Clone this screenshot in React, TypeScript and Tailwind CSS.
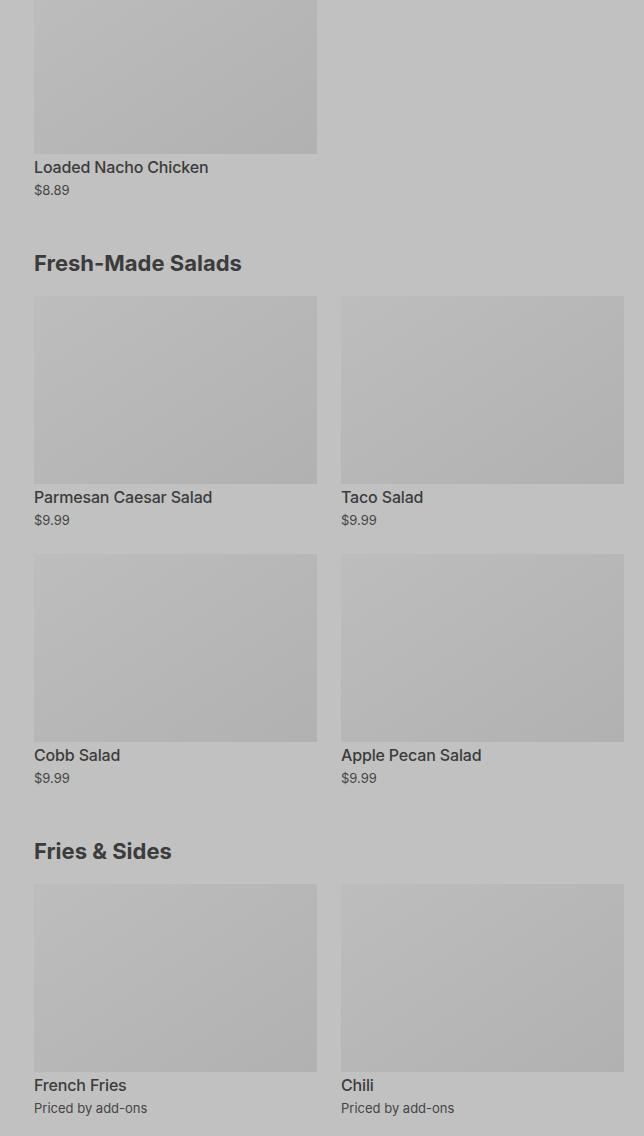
type Item = { name: string; price: string }

const sections: { title?: string; items: Item[] }[] = [
    { items: [{ name: 'Loaded Nacho Chicken', price: '$8.89' }] },
    {
        title: 'Fresh-Made Salads',
        items: [
            { name: 'Parmesan Caesar Salad', price: '$9.99' },
            { name: 'Taco Salad', price: '$9.99' },
            { name: 'Cobb Salad', price: '$9.99' },
            { name: 'Apple Pecan Salad', price: '$9.99' },
        ],
    },
    {
        title: 'Fries & Sides',
        items: [
            { name: 'French Fries', price: 'Priced by add-ons' },
            { name: 'Chili', price: 'Priced by add-ons' },
        ],
    },
]

const Card = ({ item }: { item: Item }) => (
    <div className="flex flex-col">
        <div className="h-[188px] w-full bg-gradient-to-br from-[#bdbdbd] to-[#b1b1b1]" />
        <div className="mt-[2px] text-[16px] leading-[22px] font-medium tracking-[-0.01em] text-[#3c3c3c]">{item.name}</div>
        <div className="mt-[2px] text-[13px] leading-[20px] text-[#454545]">{item.price}</div>
    </div>
)

const App = () => {
    return (
        <div className="min-h-[1136px] w-full overflow-hidden bg-[#c1c1c1] font-['Inter',sans-serif]">
            <div className="-mt-[34px] flex flex-col gap-[48px] pl-[34px] pr-[20px]">
                {sections.map((s, i) => (
                    <div key={i} className="flex flex-col">
                        {s.title && (
                            <h2 className="mb-[18px] text-[22px] leading-[30px] font-bold text-[#3c3c3c]">
                                {s.title}
                            </h2>
                        )}
                        <div className="grid grid-cols-2 gap-x-[24px] gap-y-[24px]">
                            {s.items.map((it) => (
                                <Card key={it.name} item={it} />
                            ))}
                        </div>
                    </div>
                ))}
            </div>
        </div>
    )
}

export default App
